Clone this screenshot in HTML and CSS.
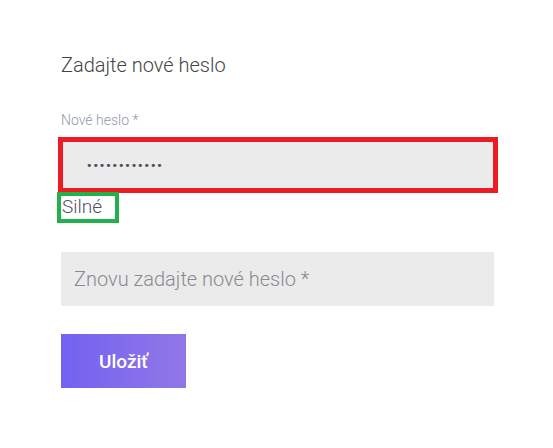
FILE: index.html
```html
<!DOCTYPE html>
<html lang="sk">
<head>
<meta charset="utf-8">
<title>Zadajte nové heslo</title>
<link rel="stylesheet" href="styles.css">
</head>
<body>
<form class="form">
  <h2 class="title">Zadajte nové heslo</h2>
  <label class="label">Nové heslo *</label>
  <div class="field field-active"><span class="dots">••••••••••••</span></div>
  <div class="strength">Silné</div>
  <div class="field field-second"><span class="placeholder">Znovu zadajte nové heslo *</span></div>
  <button type="button" class="btn">Uložiť</button>
</form>
</body>
</html>
```
FILE: styles.css
```css
html, body {
  margin: 0;
  padding: 0;
  background: #fff;
}
body {
  font-family: Roboto, "Liberation Sans", sans-serif;
  width: 553px;
  height: 448px;
  overflow: hidden;
}
.form {
  display: flex;
  flex-direction: column;
  align-items: flex-start;
  padding: 53px 0 0 61px;
}
.title {
  margin: 0;
  font-weight: 300;
  font-size: 20px;
  line-height: 24px;
  color: #444;
}
.label {
  margin-top: 35px;
  font-size: 14px;
  line-height: 16px;
  font-weight: 300;
  color: #8f97a8;
}
.field {
  box-sizing: border-box;
  background: #ebebeb;
  display: flex;
  align-items: center;
}
.field-active {
  margin-top: 9px;
  margin-left: -3px;
  width: 440px;
  height: 56px;
  border: 5px solid #ed1c24;
  padding-left: 23px;
}
.dots {
  font-size: 11px;
  letter-spacing: -0.1px;
  color: #4a4f57;
  font-family: "DejaVu Sans", sans-serif;
}
.strength {
  margin-left: -4px;
  margin-top: -1px;
  border: 4px solid #22b14c;
  width: 62px;
  height: 31px;
  box-sizing: border-box;
  padding-left: 1px;
  font-size: 19px;
  line-height: 22px;
  font-weight: 300;
  color: #4f5368;
}
.field-second {
  margin-top: 29px;
  width: 433px;
  height: 54px;
  padding-left: 13px;
}
.placeholder {
  font-size: 20px;
  font-weight: 300;
  color: #8a8a8f;
}
.btn {
  margin-top: 28px;
  width: 125px;
  height: 54px;
  border: 0;
  padding: 0;
  background: linear-gradient(90deg, #7362f2 0%, #9177e6 100%);
  color: #fff;
  font-family: Roboto, "Liberation Sans", sans-serif;
  font-size: 19px;
  font-weight: 500;
  cursor: pointer;
}
```
